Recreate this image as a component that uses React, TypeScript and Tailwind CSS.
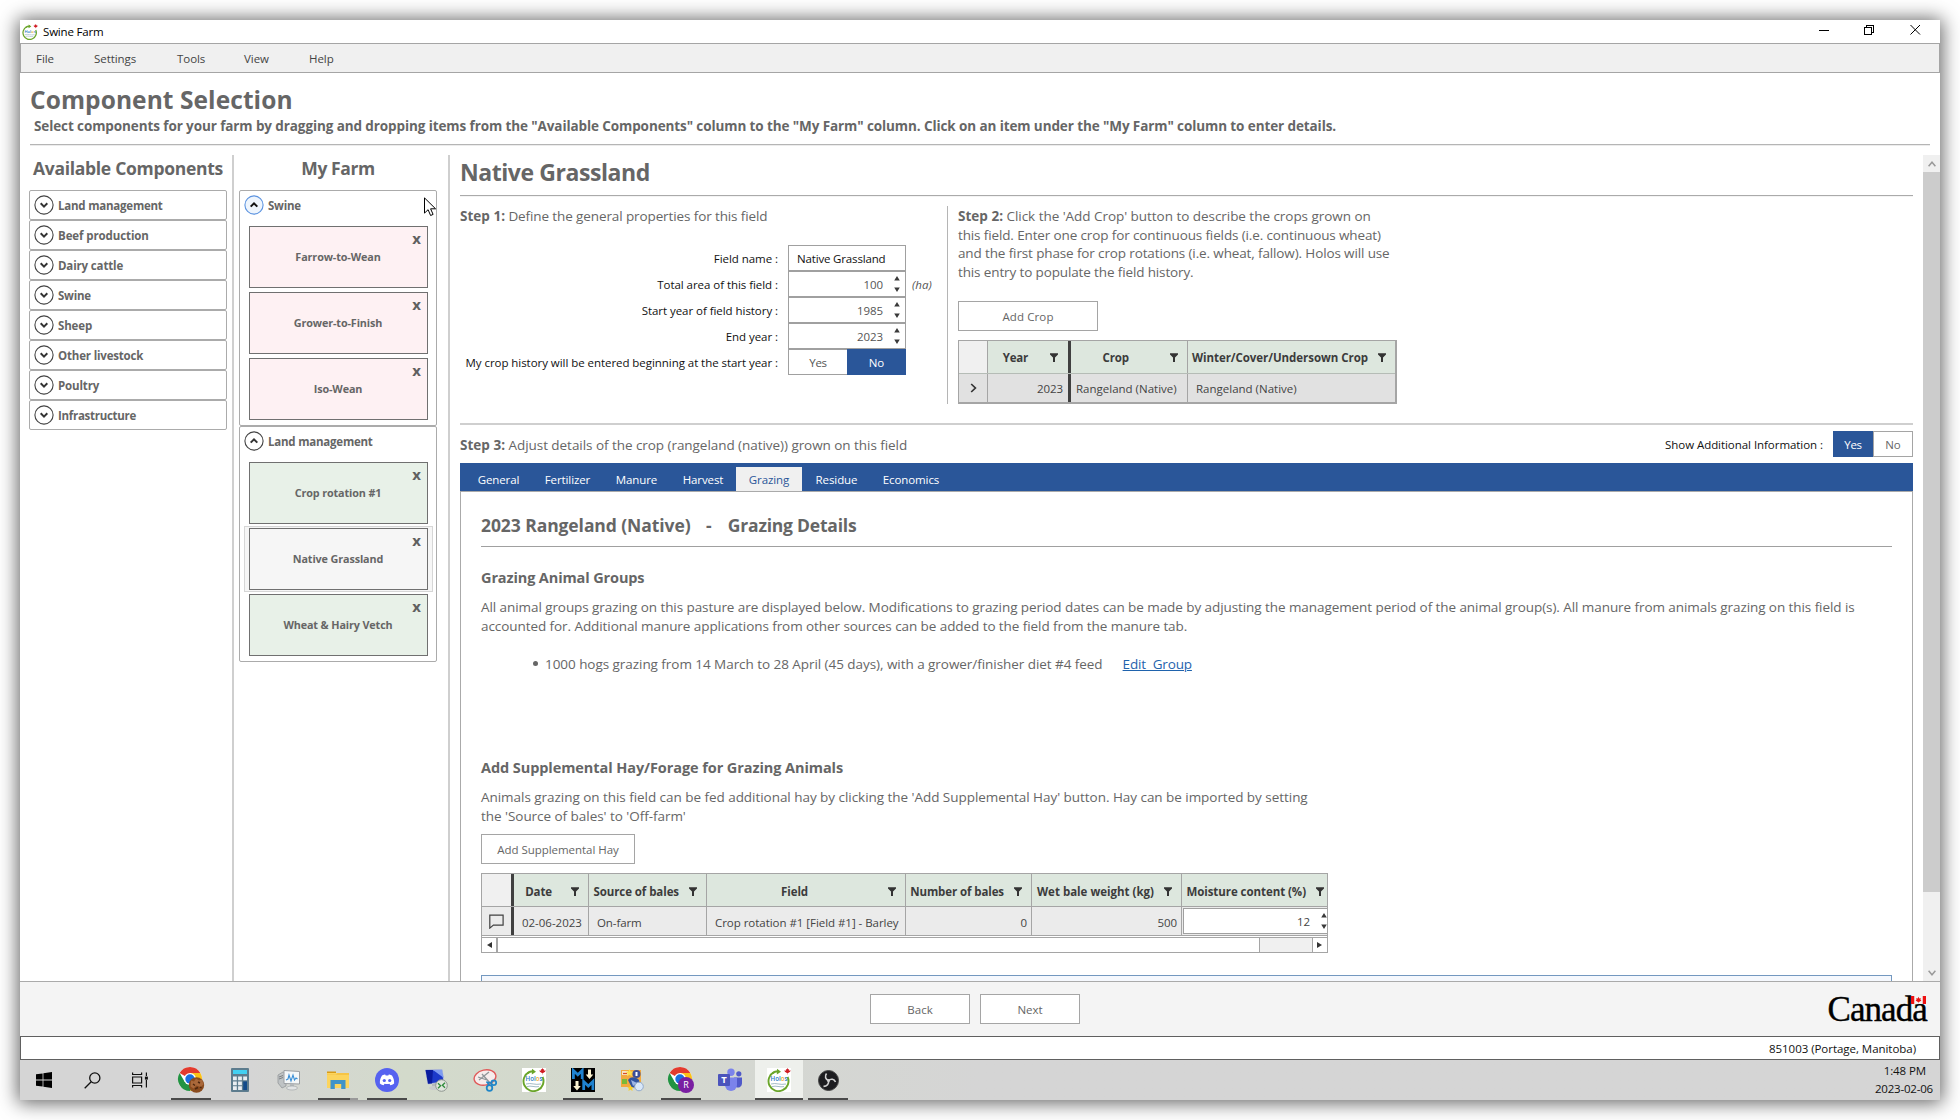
import type { ReactNode } from "react";

const small = "text-[11.5px] tracking-[-0.05px]";
const body = "pt-px text-[13.5px] leading-[18.67px]";

function CircleChevron({ up = false, active = false }: { up?: boolean; active?: boolean }) {
  return (
    <svg width="20" height="20" viewBox="0 0 20 20" fill="none" className="shrink-0">
      <circle cx="10" cy="10" r="9.1" stroke={active ? "#5d94e0" : "#444444"} strokeWidth="1.1" fill={active ? "#eef5fd" : "#ffffff"} />
      <path d={up ? "M6.7 11.6 10 8.3l3.3 3.3" : "M6.7 8.3 10 11.6l3.3-3.3"} stroke={active ? "#111111" : "#333333"} strokeWidth="2" />
    </svg>
  );
}

function Funnel() {
  return (
    <svg width="8" height="9" viewBox="0 0 8 9" className="shrink-0">
      <path d="M0 0.3h8v1.2L5 4.6V9H3V4.6L0 1.5z" fill="#333333" />
    </svg>
  );
}

function Spinner() {
  return (
    <svg width="6" height="18" viewBox="0 0 6 18" className="shrink-0">
      <path d="M3 1 5.8 5.4H.2zM3 17 .2 12.6h5.6z" fill="#3a3a3a" />
    </svg>
  );
}

function Accordion({ label, tracking }: { label: string; tracking: string }) {
  return (
    <div className="flex h-[30px] items-center rounded-[2px] border border-[#ababab] pl-[4px]">
      <CircleChevron />
      <span className={`ml-[4px] pt-px text-[11.5px] font-bold text-[#666] ${tracking}`}>{label}</span>
    </div>
  );
}

function Card({ label, tone, selected = false }: { label: string; tone: string; selected?: boolean }) {
  return (
    <div className={`mr-[3px] ml-[4px] flex h-[66px] border px-[4px] py-px ${selected ? "border-[#d6d6d6] bg-[#f6f6f6]" : "border-transparent"}`}>
      <div className={`relative flex flex-1 items-center justify-center border border-[#707070] pr-px ${tone}`}>
        <span className="text-[10.8px] font-bold tracking-[-0.12px] text-[#666]">{label}</span>
        <span className="absolute top-[1px] right-[6px] text-[15px] leading-[20px] font-bold text-[#606060]">x</span>
      </div>
    </div>
  );
}

function Group({ title, active = false, children }: { title: string; active?: boolean; children: ReactNode }) {
  return (
    <div className="h-[236px] rounded-[2px] border border-[#ababab]">
      <div className="flex h-[28px] items-center pl-[4px]">
        <CircleChevron up active={active} />
        <span className="ml-[4px] pt-px text-[11.5px] font-bold tracking-[-0.22px] text-[#666]">{title}</span>
      </div>
      <div className="pt-[5px]">{children}</div>
    </div>
  );
}

function Field({ label, children }: { label: string; children: ReactNode }) {
  return (
    <div className="flex h-[26px] items-center">
      <span className={`w-[318px] pt-px text-right text-[#111] ${small}`}>{label}</span>
      <div className="ml-[10px] flex h-[26px] w-[118px]">{children}</div>
    </div>
  );
}

function NumberBox({ value }: { value: string }) {
  return (
    <div className="flex flex-1 items-center justify-end border border-[#a0a0a0] pr-[5px]">
      <span className="mr-[11px] pt-px text-[11.5px] tracking-[-0.1px] text-[#555]">{value}</span>
      <Spinner />
    </div>
  );
}

function Button({ className, children }: { className: string; children: ReactNode }) {
  return (
    <button className={`flex h-[30px] items-center justify-center border border-[#a5a5a5] bg-white pt-px text-[11.5px] text-[#666] ${className}`}>
      {children}
    </button>
  );
}

function Head({ className, children, gap }: { className: string; children: ReactNode; gap: string }) {
  return (
    <div className={`flex items-center justify-end bg-[#dde7de] text-[11.5px] font-bold whitespace-nowrap text-[#3c3c3c] ${className}`}>
      <span>{children}</span>
      <span className={`flex ${gap}`}>
        <Funnel />
      </span>
    </div>
  );
}

function CropTable() {
  return (
    <div className="mt-[9px] w-[439px] border border-r-2 border-b-2 border-[#a5a5a5]">
      <div className="flex h-[32px]">
        <div className="w-[28px] bg-[#f0f0f0]" />
        <Head className="w-[81px] border-l border-[#a5a5a5] pt-px pr-[10px] tracking-[-0.2px]" gap="ml-[22px]">Year</Head>
        <div className="w-[3px] bg-[#404040]" />
        <Head className="w-[116px] pt-px pr-[9px] tracking-[-0.1px]" gap="ml-[41px]">Crop</Head>
        <Head className="flex-1 border-l border-[#a5a5a5] pt-px pr-[9px] tracking-[-0.05px]" gap="ml-[10px]">Winter/Cover/Undersown Crop</Head>
      </div>
      <div className="flex h-[29px] items-stretch border-t border-[#b5bcb6] bg-[#e1e1e1] text-[11.5px] text-[#444]">
        <div className="flex w-[28px] items-center justify-center">
          <svg width="7" height="10" viewBox="0 0 7 10" fill="none">
            <path d="M1.2 1 5.4 5 1.2 9" stroke="#333" strokeWidth="1.7" />
          </svg>
        </div>
        <div className="flex w-[81px] items-center justify-end border-l border-[#a5a5a5] pt-px pr-[5px] tracking-[-0.1px]">2023</div>
        <div className="w-[3px] bg-[#404040]" />
        <div className="flex w-[116px] items-center pt-px pl-[5px]">Rangeland (Native)</div>
        <div className="flex flex-1 items-center border-l border-[#a5a5a5] pt-px pl-[8px]">Rangeland (Native)</div>
      </div>
    </div>
  );
}

function HayTable() {
  return (
    <div className="mt-[9px] h-[80px] w-[847px] border border-[#a5a5a5]">
      <div className="flex h-[32px]">
        <div className="w-[29px] bg-[#f0f0f0]" />
        <div className="w-[3px] bg-[#404040]" />
        <Head className="w-[74px] pt-[3px] pr-[9px] tracking-[-0.1px]" gap="ml-[19px]">Date</Head>
        <Head className="w-[118px] border-l border-[#a5a5a5] pt-[3px] pr-[9px] tracking-[-0.08px]" gap="ml-[10px]">Source of bales</Head>
        <Head className="w-[199px] border-l border-[#a5a5a5] pt-[3px] pr-[9px] tracking-[-0.1px]" gap="ml-[80px]">Field</Head>
        <Head className="w-[126px] border-l border-[#a5a5a5] pt-[3px] pr-[9px] tracking-[-0.1px]" gap="ml-[10px]">Number of bales</Head>
        <Head className="w-[150px] border-l border-[#a5a5a5] pt-[3px] pr-[9px]" gap="ml-[10px]">Wet bale weight (kg)</Head>
        <Head className="flex-1 border-l border-[#a5a5a5] pt-[3px] pr-[3px] tracking-[-0.06px]" gap="ml-[10px]">Moisture content (%)</Head>
      </div>
      <div className="flex h-[30px] border-y border-[#a5a5a5] bg-[#ebebeb] text-[11.5px] text-[#444]">
        <div className="flex w-[29px] items-center justify-center">
          <svg width="15" height="15" viewBox="0 0 15 15" fill="none" stroke="#404040" strokeWidth="1.2">
            <path d="M.8 1.1h13.3v10H4.4L.8 14.1z" />
          </svg>
        </div>
        <div className="w-[3px] bg-[#404040]" />
        <div className="flex w-[74px] items-center pt-[3px] pl-[8px] tracking-[-0.02px]">02-06-2023</div>
        <div className="flex w-[118px] items-center border-l border-[#a5a5a5] pt-[3px] pl-[8px] tracking-[-0.1px]">On-farm</div>
        <div className="flex w-[199px] items-center border-l border-[#a5a5a5] pt-[3px] pl-[8px] tracking-[-0.04px]">Crop rotation #1 [Field #1] - Barley</div>
        <div className="flex w-[126px] items-center justify-end border-l border-[#a5a5a5] pt-[3px] pr-[4px]">0</div>
        <div className="flex w-[150px] items-center justify-end border-l border-[#a5a5a5] pt-[3px] pr-[4px] tracking-[-0.1px]">500</div>
        <div className="flex flex-1 border-l border-[#a5a5a5] py-px pl-px">
          <div className="flex flex-1 items-center justify-end border border-r-0 border-[#a0a0a0] bg-white">
            <span className="mr-[11px] pt-px tracking-[-0.1px]">12</span>
            <Spinner />
          </div>
        </div>
      </div>
      <div className="mt-px flex h-[15px] border-t border-[#a5a5a5]">
        <div className="flex w-[14px] items-center justify-center">
          <svg width="5" height="6" viewBox="0 0 5 6"><path d="M5 0v6L0 3z" fill="#333" /></svg>
        </div>
        <div className="w-[764px] border-r border-l-2 border-[#a5a5a5]" />
        <div className="flex-1 bg-[#f0f0f0]" />
        <div className="flex w-[15px] items-center justify-center border-l border-[#a5a5a5]">
          <svg width="5" height="6" viewBox="0 0 5 6" className="mr-px"><path d="M0 0v6l5-3z" fill="#333" /></svg>
        </div>
      </div>
    </div>
  );
}

function HolosLogo({ size }: { size: number }) {
  return (
    <svg width={size} height={size} viewBox="0 0 24 24" fill="none">
      <rect width="24" height="24" fill="#fff" />
      <path d="M7 4.2A10 10 0 1 0 20.6 9" stroke="#6aa52a" strokeWidth="1.9" />
      <path d="M5.5 5.2C7.5 3.6 9.5 3.2 12 3.4" stroke="#6aa52a" strokeWidth="2" />
      <path d="M10 .8 14 3.7l-4.2 2.7z" fill="#6aa52a" />
      <text x="3.6" y="12.9" fontSize="6.2" fontWeight="600" fontFamily="Open Sans, sans-serif" fill="#2678c4">Hol<tspan fill="#f0a832">o</tspan>s</text>
      <path d="M4 16c5-1.6 9 1.4 15 0M5 18.6c4-1.4 8 1 12 0" stroke="#8aa9b8" strokeWidth=".8" />
      <path d="M20.5 0 21.3 1.5l.8-.4-.2 1.6 1.7-.4-.5 1.4-2 1.4h-.4v1.3h-.4V5.1h-.4l-2-1.4-.5-1.4 1.7.4-.2-1.6.8.4z" fill="#d01c24" />
    </svg>
  );
}

function Chrome({ children }: { children: ReactNode }) {
  return (
    <svg width="26" height="26" viewBox="0 0 26 26" className="overflow-visible">
      <circle cx="12" cy="12" r="12" fill="#fff" />
      <path d="M12 12 1.6 6A12 12 0 0 1 22.4 6H12z" fill="#e33b2e" />
      <path d="M12 6H22.4A12 12 0 0 1 12 24l5.2-9z" fill="#fbc116" />
      <path d="M1.6 6A12 12 0 0 0 12 24l5.2-9-10.4 0z" fill="#229342" />
      <circle cx="12" cy="12" r="6" fill="#fff" />
      <circle cx="12" cy="12" r="4.7" fill="#1b6fe0" />
      {children}
    </svg>
  );
}

const icons: { bar?: "full" | "split"; hot?: boolean; icon: ReactNode }[] = [
  {
    icon: (
      <svg width="16" height="16" viewBox="0 0 16 16" fill="#000">
        <path d="M0 2.3 6.6 1.4v6.2H0zM7.4 1.3 16 0v7.6H7.4zM0 8.4h6.6v6.2L0 13.7zM7.4 8.4H16V16l-8.6-1.3z" />
      </svg>
    ),
  },
  {
    icon: (
      <svg width="17" height="17" viewBox="0 0 17 17" fill="none" stroke="#111" strokeWidth="1.3">
        <circle cx="10.8" cy="6" r="5.1" />
        <path d="M7.2 9.7.7 16.3" />
      </svg>
    ),
  },
  {
    icon: (
      <svg width="18" height="16" viewBox="0 0 18 16" fill="none" stroke="#111" strokeWidth="1.2">
        <path d="M1.6 5h9v6h-9zM1.6.5v2h9v-2M1.6 15.5v-2h9v2M15.4.5v3.5M15.4 8v7.5" />
        <path d="M13.9 4.6h3v3h-3z" fill="#111" stroke="none" />
      </svg>
    ),
  },
  {
    bar: "full",
    icon: (
      <Chrome>
        <circle cx="18.5" cy="18" r="7.7" fill="#8a4b1e" />
        <path d="M13 13.5l3 1 2-3 3 2 3-1 1.5 5-3 2.5-4-1.5-3 3-3-2z" fill="#a9683a" />
        <path d="M15 17l2 1.5M20 15l2 1M17 22l3-1.5M22 20l1.5 1" stroke="#4c260e" strokeWidth="1.4" />
      </Chrome>
    ),
  },
  {
    icon: (
      <svg width="18" height="24" viewBox="0 0 18 24">
        <rect width="18" height="24" rx="1" fill="#5d7c8e" />
        <rect x="2" y="2" width="14" height="4" fill="#43d0f2" />
        <path d="M2 8.5h3.8v3.8H2zM7.1 8.5h3.8v3.8H7.1zM2 13.4h3.8v3.8H2zM7.1 13.4h3.8v3.8H7.1zM2 18.3h3.8v3.8H2zM7.1 18.3h3.8v3.8H7.1zM12.2 8.5H16v3.8h-3.8z" fill="#e9eef2" />
        <path d="M12.2 13.4H16v8.7h-3.8z" fill="#124b8b" />
      </svg>
    ),
  },
  {
    icon: (
      <svg width="24" height="22" viewBox="0 0 24 22">
        <path d="M1 6l5-3 3 1v13l-4 2-4-5z" fill="#bfc3c5" stroke="#8c9093" strokeWidth=".7" />
        <path d="M2 8l4-1.5M2 10l4-1.5" stroke="#686c70" strokeWidth=".8" />
        <path d="M7 1.5 22.5 2.5v12.5L7 14.5z" fill="#f4f7f9" stroke="#9b9fa3" />
        <path d="M9 11l2-1 1-4 2 6 2-6 1.5 5 1.5-2 1.5 1" fill="none" stroke="#3a8fd6" strokeWidth="1.1" />
        <path d="M13 15h4v3h-4z" fill="#b5b9bc" />
        <ellipse cx="15" cy="19" rx="5.5" ry="2" fill="#e2e4e5" stroke="#9b9fa3" strokeWidth=".6" />
      </svg>
    ),
  },
  {
    bar: "split",
    icon: (
      <svg width="22" height="20" viewBox="0 0 22 20">
        <path d="M0 1.5h9v4H0z" fill="#d99b16" />
        <path d="M0 3h22v15H0z" fill="#fcd45d" />
        <path d="M0 4.5h9l1.5-1.5H22v2H0z" fill="#f6c446" />
        <path d="M3.5 10h15v9h-4.3v-5H7.8v5H3.5z" fill="#3f93c9" />
      </svg>
    ),
  },
  {
    bar: "full",
    icon: (
      <svg width="24" height="24" viewBox="0 0 24 24">
        <circle cx="12" cy="12" r="12" fill="#5662f0" />
        <path d="M7 7.5c1.6-.8 2.6-1 3.2-1l.5.9h2.6l.5-.9c.6 0 1.6.2 3.2 1 1.6 2.5 2.3 5 2.1 8-1.5 1.1-2.7 1.5-3.8 1.7l-.8-1.5c-1.6.4-3.4.4-5 0l-.8 1.5c-1.1-.2-2.3-.6-3.8-1.7-.2-3 .5-5.5 2.1-8z" fill="#fff" />
        <circle cx="9.3" cy="12.5" r="1.6" fill="#5662f0" />
        <circle cx="14.7" cy="12.5" r="1.6" fill="#5662f0" />
      </svg>
    ),
  },
  {
    icon: (
      <svg width="24" height="24" viewBox="0 0 24 24">
        <path d="M1.5 2 18 1.5 20 14 4 16z" fill="#1c39c9" stroke="#b9c0d4" />
        <path d="M9 2l9-.2 1.6 8z" fill="#7e9cf0" />
        <path d="M1.5 2 9 2l-1 13.5-4 .3z" fill="#0a1c9e" />
        <path d="M8 16l5-.5 1 3H8z" fill="#b5b9bc" />
        <ellipse cx="10.5" cy="20" rx="5.5" ry="2" fill="#c8cbcd" />
        <circle cx="17.5" cy="17.5" r="5.8" fill="#dfe5dc" stroke="#8f9691" />
        <path d="M14 15.2 16.6 17.7 14 20.2M21 14.8 18.4 17.3 21 19.8" fill="none" stroke="#2e8b3a" strokeWidth="1.3" />
      </svg>
    ),
  },
  {
    icon: (
      <svg width="24" height="24" viewBox="0 0 24 24" fill="none">
        <ellipse cx="12" cy="9.5" rx="11" ry="7.5" stroke="#e05a5a" strokeWidth="1.4" transform="rotate(-12 12 9.5)" fill="#f6ecec" />
        <path d="M6 12 16 4M9 6l8 9M5 9l9 3" stroke="#8f9598" strokeWidth="1.3" />
        <circle cx="16.5" cy="20" r="2.8" stroke="#1f86c8" strokeWidth="1.8" />
        <circle cx="20.8" cy="14.8" r="2.4" stroke="#1f86c8" strokeWidth="1.8" />
        <path d="M13.5 13.5l3 4M14 14.3l4.5.5" stroke="#1f86c8" strokeWidth="1.5" />
      </svg>
    ),
  },
  { icon: <HolosLogo size={24} /> },
  {
    bar: "full",
    icon: (
      <svg width="24" height="24" viewBox="0 0 24 24">
        <rect width="24" height="24" fill="#000" />
        <path d="M2.4 11V2.5L6.8 6.8l4.4-4.3V11M12.7 22v-8.5l4.6 4.5 4.6-4.5V22" fill="none" stroke="#1f82cf" strokeWidth="2.8" />
        <path d="M17 1.5h3v5h2.3l-3.8 4.5-3.8-4.5H17zM4.5 13h3v5h2.3L6 22.5 2.2 18h2.3z" fill="#fbf3d0" />
      </svg>
    ),
  },
  {
    icon: (
      <svg width="24" height="24" viewBox="0 0 24 24">
        <path d="M1 2h20v17H1z" fill="#f2a93f" />
        <path d="M2 3h6v4H2z" fill="#f6e3c8" />
        <path d="M3 5.5h4" stroke="#d84f28" strokeWidth="1.2" />
        <path d="M2 11h5v5H2z" fill="#79b93a" />
        <path d="M9.5 1l1.2 2.5 2.7.2-2 1.9.6 2.6-2.5-1.4L7 8.2l.6-2.6-2-1.9 2.7-.2z" fill="#fce04a" />
        <circle cx="16.5" cy="6" r="4" fill="#3c4f96" />
        <path d="M15.5 4h2v4h-2z" fill="#fff" />
        <path d="M8 12c3-4 8-3 11 0l1 6-8 2z" fill="#31549f" />
        <path d="M11 12l6 3-4 3z" fill="#9db6e6" />
        <path d="M10.5 17l1 2 2.2.2-1.6 1.5.5 2.3-2.1-1.2L8.4 23l.5-2.3-1.6-1.5 2.2-.2z" fill="#f8cf2a" />
        <circle cx="19" cy="18.5" r="4.3" fill="#d9e8fa" stroke="#8fa9cc" />
      </svg>
    ),
  },
  {
    bar: "full",
    icon: (
      <Chrome>
        <circle cx="18" cy="18" r="8" fill="#7a1fa2" />
        <text x="18" y="21.2" textAnchor="middle" fontSize="9" fontFamily="Open Sans, sans-serif" fill="#fff">R</text>
      </Chrome>
    ),
  },
  {
    icon: (
      <svg width="24" height="24" viewBox="0 0 24 24">
        <circle cx="20.8" cy="5.8" r="2.6" fill="#5059c9" />
        <path d="M16 9.5h8v6a4 4 0 0 1-6 3.5z" fill="#5059c9" />
        <circle cx="13" cy="4.3" r="3.7" fill="#7b83eb" />
        <path d="M7 9.5h12v7.5a6 6 0 0 1-12 0z" fill="#7b83eb" />
        <rect x="0" y="6" width="12" height="12" rx="1" fill="#4b53bc" />
        <text x="6" y="15.3" textAnchor="middle" fontSize="9.5" fontWeight="700" fontFamily="Open Sans, sans-serif" fill="#fff">T</text>
      </svg>
    ),
  },
  { bar: "full", hot: true, icon: <HolosLogo size={24} /> },
  {
    bar: "full",
    icon: (
      <svg width="21" height="21" viewBox="0 0 21 21" fill="none">
        <circle cx="10.5" cy="10.5" r="10" fill="#1d1d20" stroke="#444" />
        <path d="M10.5 10.5C7.5 9.5 6.5 6.5 8.5 3.5M10.5 10.5c2.4-2.2 5.8-1.5 7 1.5M10.5 10.5c.6 3.2-1.5 5.9-5 5.9" stroke="#d2d2d2" strokeWidth="1.6" />
        <circle cx="10.5" cy="10.5" r="1.5" fill="#d2d2d2" />
      </svg>
    ),
  },
];

function Taskbar() {
  return (
    <div className="flex h-[40px] bg-linear-to-r from-[#d5d5d5] from-[12%] via-[#d3dacb] via-[20%] to-[#d5d5d5] to-[50%] pr-[7px]">
      <div className="flex">
        {icons.map((item, i) => (
          <div key={i} className={`flex h-[40px] ${i < 3 ? "w-[48px]" : i === 3 ? "ml-[3px] w-[49px]" : "w-[49px]"}`}>
            <div className={`relative flex h-[40px] w-[48px] shrink-0 items-center justify-center ${item.hot ? "bg-[#eef0ec]" : ""}`}>
              {item.icon}
              {item.bar && (
                <div className={`absolute bottom-0 flex h-[2px] ${item.hot ? "w-[48px]" : "w-[40px]"}`}>
                  <div className="flex-1 bg-[#4a4a4a]" />
                  {item.bar === "split" && <div className="w-[8px] bg-[#999]" />}
                </div>
              )}
            </div>
          </div>
        ))}
      </div>
      <div className="ml-auto flex flex-col items-end pt-[2px] text-[11.5px] leading-[18px] tracking-[-0.2px] text-[#111]">
        <span className="mr-[7px] tracking-[-0.1px]">1:48 PM</span>
        <span>2023-02-06</span>
      </div>
    </div>
  );
}

const menu = [
  { label: "File", w: "w-[58px]" },
  { label: "Settings", w: "w-[83px]" },
  { label: "Tools", w: "w-[67px]" },
  { label: "View", w: "w-[65px]" },
  { label: "Help", w: "w-[60px]" },
];

const components = [
  { label: "Land management", tracking: "tracking-[-0.22px]" },
  { label: "Beef production", tracking: "tracking-[-0.1px]" },
  { label: "Dairy cattle", tracking: "tracking-[-0.15px]" },
  { label: "Swine", tracking: "tracking-[-0.25px]" },
  { label: "Sheep", tracking: "tracking-[-0.15px]" },
  { label: "Other livestock", tracking: "tracking-[-0.18px]" },
  { label: "Poultry", tracking: "tracking-[-0.15px]" },
  { label: "Infrastructure", tracking: "tracking-[-0.28px]" },
];

const tabs = [
  { label: "General", w: "w-[67px]" },
  { label: "Fertilizer", w: "w-[71px]" },
  { label: "Manure", w: "w-[67px]" },
  { label: "Harvest", w: "w-[66px]" },
  { label: "Grazing", w: "w-[66px]" },
  { label: "Residue", w: "w-[69px]" },
  { label: "Economics", w: "w-[80px]" },
];

export default function App() {
  return (
    <div className="h-[1120px] w-[1960px] overflow-hidden bg-white p-[20px] font-['Open_Sans','Noto_Sans',sans-serif] whitespace-nowrap">
      <div className="relative flex h-[1080px] w-[1920px] flex-col bg-white shadow-[0_1px_18px_2px_rgba(0,0,0,0.62)]">
        <div className="flex h-[23px] items-center pr-[19px] pl-[2px]">
          <HolosLogo size={16} />
          <span className="ml-[5px] text-[11.5px] tracking-[-0.18px] text-black">Swine Farm</span>
          <svg width="102" height="11" viewBox="0 0 102 11" fill="none" stroke="#000" className="mt-[-5px] ml-auto" shapeRendering="crispEdges">
            <path d="M0 6.5h10" />
            <path d="M45.5 3.5h7v7h-7zM47.5 3.5v-2h7v7h-2" />
            <path d="M91.5 1l9.5 9.5M101 1l-9.5 9.5" shapeRendering="auto" />
          </svg>
        </div>
        <div className="flex h-[30px] items-center border border-[#a5a5a5] bg-[#f0f0f0] pt-px pl-[15px]">
          {menu.map((m) => (
            <span key={m.label} className={`text-[11.5px] tracking-[-0.05px] text-[#444] ${m.w}`}>{m.label}</span>
          ))}
        </div>

        <div className="h-[82px] shrink-0 px-[10px]">
          <h1 className="h-[43px] pt-[11px] text-[24.5px] leading-[32px] font-bold tracking-[0.08px] text-[#666]">Component Selection</h1>
          <p className="h-[28px] pl-[4px] text-[13.5px] leading-[20px] font-bold tracking-[-0.1px] text-[#666]">
            Select components for your farm by dragging and dropping items from the "Available Components" column to the "My Farm" column. Click on an item under the "My Farm" column to enter details.
          </p>
          <div className="h-[2px] border-t border-[#b5b5b5] bg-[#ececec]" />
        </div>

        <div className="flex h-[826px] shrink-0">
          <aside className="w-[214px] border-r-2 border-[#cfcfcf]">
            <h2 className="h-[35px] pt-[1px] pl-[13px] text-[17.5px] leading-[24px] font-bold tracking-[-0.3px] text-[#666]">Available Components</h2>
            <div className="ml-[9px] w-[198px]">
              {components.map((c) => (
                <Accordion key={c.label} label={c.label} tracking={c.tracking} />
              ))}
            </div>
          </aside>
          <aside className="w-[216px] border-r-2 border-[#cfcfcf]">
            <h2 className="h-[35px] w-[208px] pt-[1px] text-center text-[17.5px] leading-[24px] font-bold tracking-[-0.42px] text-[#666]">My Farm</h2>
            <div className="ml-[5px] w-[198px]">
              <Group title="Swine" active>
                <Card label="Farrow-to-Wean" tone="bg-[#fef1f3]" />
                <Card label="Grower-to-Finish" tone="bg-[#fef1f3]" />
                <Card label="Iso-Wean" tone="bg-[#fef1f3]" />
              </Group>
              <Group title="Land management">
                <Card label="Crop rotation #1" tone="bg-[#e8f1e8]" />
                <Card label="Native Grassland" tone="bg-[#f6f6f6]" selected />
                <Card label="Wheat & Hairy Vetch" tone="bg-[#e8f1e8]" />
              </Group>
            </div>
          </aside>

          <main className="w-[1473px] overflow-hidden pl-[10px] text-[#666]">
            <div className="w-[1453px]">
              <h2 className="h-[40px] pt-[1px] text-[23px] leading-[32px] font-bold tracking-[-0.43px]">Native Grassland</h2>
              <div className="h-[2px] border-t border-[#aaaaaa] bg-[#f4f4f4]" />

              <section className="flex h-[226px] pt-[9px]">
                <div className="w-[487px]">
                  <p className={`h-[39px] ${body} tracking-[-0.11px]`}>
                    <b className="tracking-[0.02px]">Step 1:</b> Define the general properties for this field
                  </p>
                  <div>
                    <Field label="Field name :">
                      <div className="flex flex-1 items-center border border-[#a0a0a0] pt-px pl-[8px] text-[11.5px] tracking-[-0.16px] text-[#111]">Native Grassland</div>
                    </Field>
                    <div className="flex h-[26px]">
                      <Field label="Total area of this field :"><NumberBox value="100" /></Field>
                      <i className="ml-[6px] pt-px text-[11.5px] leading-[26px] text-[#555]">(ha)</i>
                    </div>
                    <Field label="Start year of field history :"><NumberBox value="1985" /></Field>
                    <Field label="End year :"><NumberBox value="2023" /></Field>
                    <Field label="My crop history will be entered beginning at the start year :">
                      <div className="flex w-[59px] items-center justify-center border border-r-0 border-[#a0a0a0] pt-px text-[11.5px] tracking-[-0.3px] text-[#555]">Yes</div>
                      <div className="flex w-[59px] items-center justify-center bg-[#2a5699] pt-px text-[11.5px] text-white">No</div>
                    </Field>
                  </div>
                </div>
                <div className="h-[198px] w-px bg-[#b5b5b5]" />
                <div className="ml-[10px]">
                  <p className={`h-[95px] ${body} tracking-[-0.13px]`}>
                    <b className="tracking-[0.02px]">Step 2:</b>
                    <span className="tracking-[-0.04px]"> Click the 'Add Crop' button to describe the crops grown on</span>
                    <br />
                    this field. Enter one crop for continuous fields (i.e. continuous wheat)<br />
                    and the first phase for crop rotations (i.e. wheat, fallow). Holos will use<br />
                    this entry to populate the field history.
                  </p>
                  <Button className="w-[140px] tracking-[0.1px]">Add Crop</Button>
                  <CropTable />
                </div>
              </section>

              <div className="h-[2px] bg-[#cfcfcf]" />
              <div className="flex h-[38px] justify-between">
                <p className={`mt-[10px] ${body} tracking-[-0.05px]`}>
                  <b className="tracking-[0.02px]">Step 3:</b> Adjust details of the crop (rangeland (native)) grown on this field
                </p>
                <div className="mt-[6px] flex h-[26px] items-center text-[11.5px]">
                  <span className="mr-[10px] pt-px tracking-[-0.05px] text-[#111]">Show Additional Information :</span>
                  <div className="flex h-[26px] w-[40px] items-center justify-center bg-[#2a5699] pt-px tracking-[-0.3px] text-white">Yes</div>
                  <div className="flex h-[26px] w-[40px] items-center justify-center border border-[#a5a5a5] pt-px">No</div>
                </div>
              </div>

              <nav className="flex h-[28px] items-end bg-[#2a5699] pl-[5px]">
                {tabs.map((t) => (
                  <div
                    key={t.label}
                    className={`flex h-[24px] items-center justify-center pt-px text-[11.5px] tracking-[-0.1px] ${t.w} ${t.label === "Grazing" ? "bg-[#f0f0f0] text-[#2a5699]" : "text-white"}`}
                  >
                    {t.label}
                  </div>
                ))}
              </nav>

              <section className="h-[491px] border border-[#aaaaaa] px-[20px]">
                <h3 className="h-[55px] border-b border-[#a0a0a0] pt-[21px] text-[17.5px] leading-[24px] font-bold tracking-[-0.08px] whitespace-pre">
                  {"2023 Rangeland (Native)   "}
                  <span className="pl-[2px]">{"-   "}</span>
                  <span className="pl-[3px] tracking-[-0.22px]">Grazing Details</span>
                </h3>
                <h4 className="h-[50px] pt-[21px] text-[14.5px] leading-[20px] font-bold tracking-[-0.12px]">Grazing Animal Groups</h4>
                <p className={`h-[57px] ${body} tracking-[-0.073px]`}>
                  All animal groups grazing on this pasture are displayed below. Modifications to grazing period dates can be made by adjusting the management period of the animal group(s). All manure from animals grazing on this field is<br />
                  accounted for. Additional manure applications from other sources can be added to the field from the manure tab.
                </p>
                <div className={`flex h-[103px] pl-[52px] ${body}`}>
                  <span className="mt-[6px] mr-[7px] h-[5px] w-[5px] rounded-full bg-[#666]" />
                  <span className="tracking-[-0.05px]">1000 hogs grazing from 14 March to 28 April (45 days), with a grower/finisher diet #4 feed</span>
                  <a className="ml-[20px] tracking-[-0.15px] whitespace-pre text-[#1f63ad] underline decoration-1 underline-offset-[1px]">Edit  Group</a>
                </div>
                <h4 className="h-[30px] pt-px text-[14.5px] leading-[20px] font-bold tracking-[-0.08px]">Add Supplemental Hay/Forage for Grazing Animals</h4>
                <p className={`h-[47px] ${body} tracking-[-0.04px]`}>
                  Animals grazing on this field can be fed additional hay by clicking the 'Add Supplemental Hay' button. Hay can be imported by setting<br />
                  the 'Source of bales' to 'Off-farm'
                </p>
                <Button className="w-[154px] tracking-[-0.04px]">Add Supplemental Hay</Button>
                <HayTable />
                <div className="mt-[22px] h-[20px] border border-[#7398c0] bg-[#f5f8fd]" />
              </section>
            </div>
          </main>

          <div className="flex w-[17px] flex-col bg-[#f0f0f0]">
            <div className="flex h-[17px] items-center justify-center">
              <svg width="8" height="6" viewBox="0 0 8 6" fill="none" stroke="#9a9a9a" strokeWidth="1.5"><path d="M.6 5.2 4 1.2l3.4 4" /></svg>
            </div>
            <div className="h-[720px] bg-[#cccccc]" />
            <div className="flex flex-1 items-end justify-center pb-[5px]">
              <svg width="8" height="6" viewBox="0 0 8 6" fill="none" stroke="#9a9a9a" strokeWidth="1.5"><path d="M.6.8 4 4.8l3.4-4" /></svg>
            </div>
          </div>
        </div>

        <footer className="relative z-10 flex h-[55px] shrink-0 items-start border-t border-[#aaaaaa] bg-[#f4f4f4] pt-[12px]">
          <Button className="ml-[850px] w-[100px]">Back</Button>
          <Button className="ml-[10px] w-[100px]">Next</Button>
          <div className="relative mr-[13px] ml-auto pt-px font-['Liberation_Serif',serif] text-[35px] leading-[30px] tracking-[-0.9px] text-black [-webkit-text-stroke:0.4px_black]">
            Canada
            <svg width="15" height="8" viewBox="0 0 15 8" className="absolute top-[2px] right-[1px]">
              <path d="M0 0h3.5v8H0zM11.5 0H15v8h-3.5z" fill="#ee1111" />
              <path d="M3.5 0h8v8h-8z" fill="#f4f4f4" />
              <path d="M7.5.8 8.3 2.4l1.6-.2-.5 1.5 1 .8-1.9 1.3-.8.2v1.2h-.4V6l-.8-.2-1.9-1.3 1-.8-.5-1.5 1.6.2z" fill="#ee1111" />
            </svg>
          </div>
        </footer>
        <div className="relative z-10 flex h-[24px] shrink-0 items-center justify-end border border-[#606060] bg-white pt-px pr-[23px] text-[11.5px] tracking-[-0.04px] text-[#111]">
          851003 (Portage, Manitoba)
        </div>
        <Taskbar />

        <svg width="13" height="20" viewBox="0 0 13 20" className="absolute top-[177px] left-[404px]">
          <path d="M.5.9v15.2l3.6-3.4 2.5 5.8 2.5-1.1-2.5-5.6h5z" fill="#fff" stroke="#000" />
        </svg>
      </div>
    </div>
  );
}
